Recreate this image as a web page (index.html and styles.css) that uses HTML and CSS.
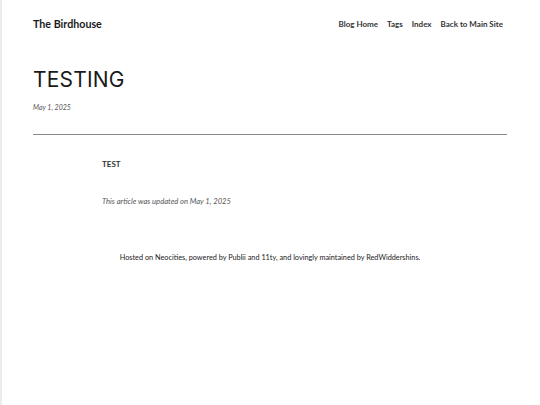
FILE: index.html
```html
<!DOCTYPE html>
<html>
<head>
<meta charset="utf-8">
<link rel="stylesheet" href="styles.css">
</head>
<body>
<div class="page">
  <header class="top">
    <a class="logo" href="#">The Birdhouse</a>
    <nav class="nav">
      <a href="#">Blog Home</a>
      <a href="#">Tags</a>
      <a href="#">Index</a>
      <a href="#">Back to Main Site</a>
    </nav>
  </header>
  <section class="hero">
    <h1 class="title">TESTING</h1>
    <div class="date">May 1, 2025</div>
  </section>
  <hr class="rule">
  <article class="content">
    <p class="body">TEST</p>
    <p class="updated">This article was updated on May 1, 2025</p>
  </article>
  <footer class="foot">Hosted on Neocities, powered by Publii and 11ty, and lovingly maintained by RedWiddershins.</footer>
</div>
</body>
</html>
```
FILE: styles.css
```css
html, body { margin: 0; padding: 0; background: #fff; }
body {
  font-family: "Lato", "Noto Sans", sans-serif;
  color: #222;
  border-left: 2px solid #ececec;
  min-height: 405px;
  box-sizing: border-box;
}
.page { padding: 0 33px 0 31px; }
.top {
  display: flex;
  justify-content: space-between;
  align-items: center;
  height: 47px;
}
.logo {
  font-size: 10.7px;
  font-weight: 700;
  color: #1a1a1a;
  text-decoration: none;
}
.nav { display: flex; gap: 9px; padding-right: 4px; }
.nav a {
  font-size: 8px;
  font-weight: 700;
  color: #333;
  text-decoration: none;
}
.hero { padding-top: 20px; }
.title {
  margin: 0;
  font-family: "Inter", "Open Sans", sans-serif;
  font-weight: 400;
  font-size: 21px;
  line-height: 26px;
  letter-spacing: 0.2px;
  color: #1a1a1a;
}
.date {
  margin-top: 10px;
  font-size: 7px;
  font-style: italic;
  color: #555;
}
.rule {
  margin: 23px 0 0 0;
  border: 0;
  border-top: 1px solid #888;
}
.content { padding: 0 0 0 69px; }
.body {
  margin: 24px 0 0 0;
  font-size: 8px;
  font-weight: 700;
  color: #333;
}
.updated {
  margin: 27px 0 0 0;
  font-size: 7.6px;
  font-style: italic;
  color: #555;
}
.foot {
  margin-top: 47px;
  text-align: center;
  font-size: 7.3px;
  color: #222;
}
```
